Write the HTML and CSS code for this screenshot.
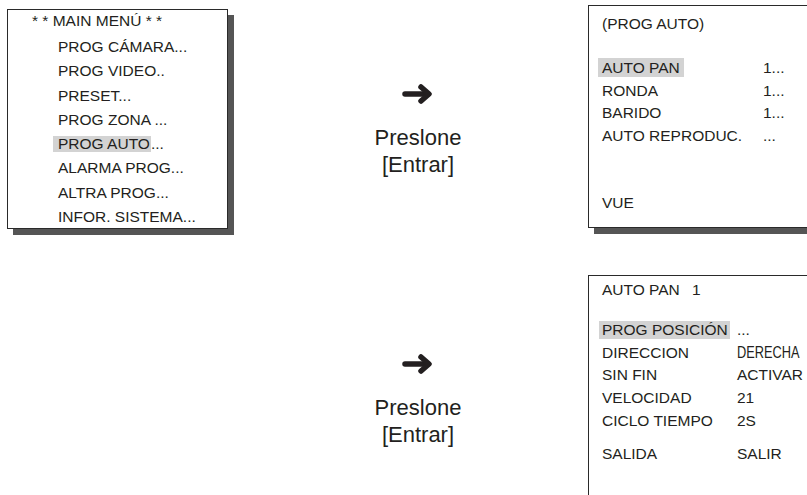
FILE: index.html
```html
<!doctype html>
<html lang="es">
<head>
	<meta charset="UTF-8" />
	<title>Menú PROG AUTO</title>
	<link rel="stylesheet" href="styles.css">
</head>
<body>

<div class="page">

	<div class="screen main-menu">
		<div class="screen-title">* * MAIN MENÚ * *</div>
		<ul class="menu-list">
			<li>PROG CÁMARA...</li>
			<li>PROG VIDEO..</li>
			<li>PRESET...</li>
			<li>PROG ZONA ...</li>
			<li><span class="sel">PROG AUTO</span>...</li>
			<li>ALARMA PROG...</li>
			<li>ALTRA PROG...</li>
			<li>INFOR. SISTEMA...</li>
		</ul>
	</div>

	<div class="step">
		<svg class="arrow" width="32" height="22" viewBox="0 0 32 22">
			<path d="M3 11 H24" />
			<path d="M19 4 L27 11 L19 18" />
		</svg>
		<p>Preslone<br>[Entrar]</p>
	</div>

	<div class="screen prog-auto">
		<div class="screen-title">(PROG AUTO)</div>
		<div class="opts">
			<span><span class="sel">AUTO PAN</span></span><span>1...</span>
			<span>RONDA</span><span>1...</span>
			<span>BARIDO</span><span>1...</span>
			<span>AUTO REPRODUC.</span><span>...</span>
		</div>
		<div class="foot">VUE</div>
	</div>

	<div class="empty"></div>

	<div class="step">
		<svg class="arrow" width="32" height="22" viewBox="0 0 32 22">
			<path d="M3 11 H24" />
			<path d="M19 4 L27 11 L19 18" />
		</svg>
		<p>Preslone<br>[Entrar]</p>
	</div>

	<div class="screen auto-pan">
		<div class="screen-title">AUTO PAN <span class="num">1</span></div>
		<div class="opts">
			<span><span class="sel">PROG POSICIÓN</span></span><span>...</span>
			<span>DIRECCION</span><span><span class="narrow">DERECHA</span></span>
			<span>SIN FIN</span><span>ACTIVAR</span>
			<span>VELOCIDAD</span><span>21</span>
			<span>CICLO TIEMPO</span><span>2S</span>
		</div>
		<div class="opts foot">
			<span>SALIDA</span><span>SALIR</span>
		</div>
	</div>

</div>

</body>
</html>
```

FILE: styles.css
```css
html, body{
	margin: 0;
	padding: 0;
	overflow: hidden;
	background: #fff;
}
body{
	font-family: "Liberation Sans", Arial, sans-serif;
	font-size: 15.5px;
	color: #231f20;
}
.page{
	display: grid;
	grid-template-columns: 221px 360px 240px;
	grid-template-rows: 223px 220px;
	row-gap: 47px;
	padding: 5px 0 0 7px;
}
.screen{
	border: 1px solid #2a2a2a;
	box-shadow: 6px 6px 0 #555;
	background: #fff;
	box-sizing: border-box;
}

/* main menu */
.main-menu{
	margin-top: 4px;
	height: 220px;
}
.main-menu .screen-title{
	line-height: 22px;
	padding-left: 24px;
}
.menu-list{
	list-style: none;
	margin: 3px 0 0 0;
	padding: 0 0 0 50px;
}
.menu-list li{
	line-height: 24.3px;
}
.main-menu .sel{
	display: inline-block;
	line-height: 16px;
	padding: 0 1px 0 5px;
	margin-left: -5px;
}
.sel{
	background: #d3d3d3;
}

/* arrow + caption */
.step{
	padding: 78px 0 0 20px;
	text-align: center;
}
.arrow{
	display: block;
	margin: 0 auto;
}
.arrow path{
	fill: none;
	stroke: #231f20;
	stroke-width: 5.5;
	stroke-linecap: round;
	stroke-linejoin: round;
}
.step p{
	margin: 19px 0 0 0;
	font-size: 22px;
	line-height: 27px;
}

/* PROG AUTO screen */
.prog-auto{
	height: 223px;
	padding: 7px 0 0 13px;
}
.screen-title{
	line-height: 22.8px;
}
.opts{
	display: grid;
	grid-template-columns: 161px auto;
	line-height: 22.8px;
}
.prog-auto .opts{
	margin-top: 21px;
}
.prog-auto .foot{
	margin-top: 44px;
	line-height: 22.8px;
}
.prog-auto .sel{
	display: inline-block;
	line-height: 19px;
	padding: 0 4px;
	margin-left: -4px;
}

/* AUTO PAN screen */
.auto-pan{
	height: 220px;
	padding: 3px 0 0 13px;
	border-bottom: none;
	box-shadow: none;
}
.auto-pan .opts{
	grid-template-columns: 135px auto;
	margin-top: 17px;
}
.auto-pan .opts.foot{
	margin-top: 10px;
}
.num{
	margin-left: 8px;
}
.auto-pan .sel{
	display: inline-block;
	line-height: 18px;
	padding: 0 2px 0 3px;
	margin-left: -3px;
}
.narrow{
	display: inline-block;
	font-size: 16px;
	transform: scaleX(0.8);
	transform-origin: left center;
}
```
